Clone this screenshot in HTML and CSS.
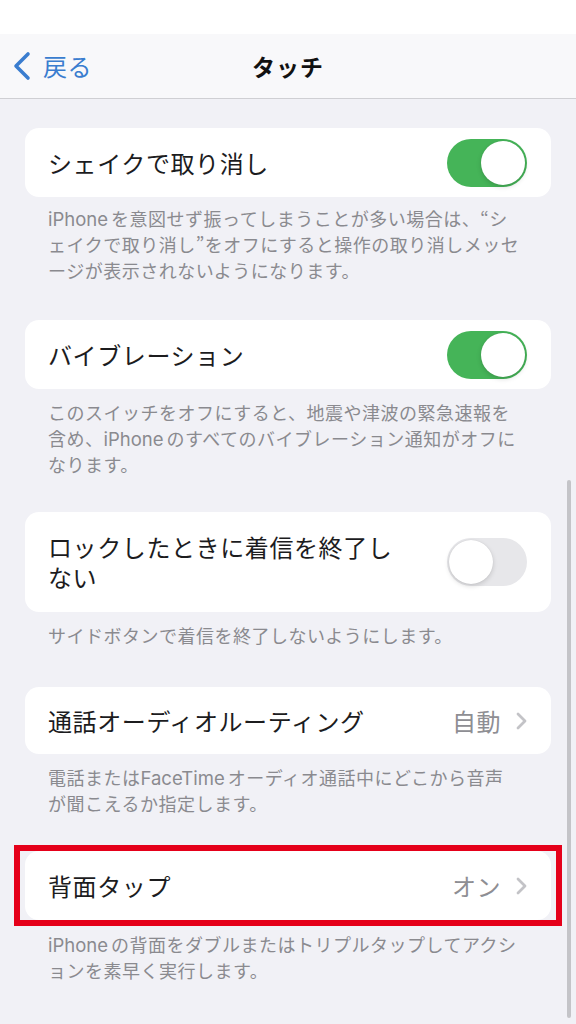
FILE: index.html
```html
<!DOCTYPE html>
<html lang="ja">
<head>
<meta charset="utf-8">
<title>タッチ</title>
<link rel="stylesheet" href="styles.css">
</head>
<body>
<div class="status"></div>
<header class="nav">
  <div class="back">
    <svg class="back-chev" width="20" height="30" viewBox="0 0 20 30"><path d="M16 3 L4 15 L16 27" fill="none" stroke="#3a7dcf" stroke-width="3.6" stroke-linecap="round" stroke-linejoin="round"/></svg>
    <span class="back-label">戻る</span>
  </div>
  <div class="title">タッチ</div>
  <div class="spacer"></div>
</header>
<main class="content">
  <section class="group g1">
    <div class="card">
      <span class="label">シェイクで取り消し</span>
      <span class="toggle on"><span class="knob"></span></span>
    </div>
    <p class="footer"><span class="latin">iPhone</span>を意図せず振ってしまうことが多い場合は、“シ<br>ェイクで取り消し”をオフにすると操作の取り消しメッセ<br>ージが表示されないようになります。</p>
  </section>
  <section class="group g2">
    <div class="card">
      <span class="label">バイブレーション</span>
      <span class="toggle on"><span class="knob"></span></span>
    </div>
    <p class="footer">このスイッチをオフにすると、地震や津波の緊急速報を<br>含め、<span class="latin">iPhone</span>のすべてのバイブレーション通知がオフに<br>なります。</p>
  </section>
  <section class="group g3">
    <div class="card tall">
      <span class="label wrap">ロックしたときに着信を終了しない</span>
      <span class="toggle off"><span class="knob"></span></span>
    </div>
    <p class="footer">サイドボタンで着信を終了しないようにします。</p>
  </section>
  <section class="group g4">
    <div class="card">
      <span class="label">通話オーディオルーティング</span>
      <span class="value">自動<svg class="chev" width="14" height="20" viewBox="0 0 14 20"><path d="M3 3 L10 10 L3 17" fill="none" stroke="#c3c3c7" stroke-width="2.8" stroke-linecap="round" stroke-linejoin="round"/></svg></span>
    </div>
    <p class="footer">電話または<span class="latin">FaceTime</span>オーディオ通話中にどこから音声<br>が聞こえるか指定します。</p>
  </section>
  <section class="group g5">
    <div class="highlight">
      <div class="card">
        <span class="label">背面タップ</span>
        <span class="value">オン<svg class="chev" width="14" height="20" viewBox="0 0 14 20"><path d="M3 3 L10 10 L3 17" fill="none" stroke="#c3c3c7" stroke-width="2.8" stroke-linecap="round" stroke-linejoin="round"/></svg></span>
      </div>
    </div>
    <p class="footer"><span class="latin">iPhone</span>の背面をダブルまたはトリプルタップしてアクシ<br>ョンを素早く実行します。</p>
  </section>
</main>
<div class="scrollbar"></div>
</body>
</html>
```
FILE: styles.css
```css
html, body {
  margin: 0;
  padding: 0;
}
body {
  width: 576px;
  height: 1024px;
  overflow: hidden;
  background: #f1f1f6;
  font-family: "Noto Sans CJK JP", "Noto Sans", sans-serif;
  color: #1c1c1e;
  position: relative;
}
.status {
  height: 34px;
  background: #ffffff;
}
.nav {
  height: 64px;
  background: #f8f8fa;
  border-bottom: 1px solid #cfcfd3;
  display: grid;
  grid-template-columns: 1fr auto 1fr;
  align-items: center;
}
.back {
  display: flex;
  align-items: center;
  padding-left: 12px;
  gap: 11px;
}
.back-chev {
  display: block;
}
.back-label {
  font-size: 24px;
  color: #3a7dcf;
  line-height: 1;
  letter-spacing: 0.5px;
}
.title {
  font-size: 23px;
  font-weight: 700;
  letter-spacing: 1px;
  color: #111;
}
.content {
  padding: 29px 25px 0 25px;
}
.group {
  margin: 0;
}
.card {
  background: #ffffff;
  border-radius: 14px;
  height: 69px;
  display: flex;
  align-items: center;
  justify-content: space-between;
  padding: 0 24px 0 23px;
  box-sizing: border-box;
}
.card.tall {
  height: 100px;
}
.label {
  font-size: 24px;
  line-height: 30px;
  letter-spacing: 0.6px;
  color: #1c1c1e;
}
.label.wrap {
  max-width: 355px;
}
.toggle {
  width: 80px;
  height: 48px;
  border-radius: 24px;
  position: relative;
  flex: none;
}
.toggle.on {
  background: #45b458;
}
.toggle.off {
  background: #e7e7ea;
}
.knob {
  position: absolute;
  top: 2px;
  width: 44px;
  height: 44px;
  border-radius: 50%;
  background: #ffffff;
  box-shadow: 0 2px 5px rgba(0,0,0,0.15), 0 0 1px rgba(0,0,0,0.12);
}
.toggle.on .knob {
  right: 2px;
}
.toggle.off .knob {
  left: 2px;
}
.value {
  display: flex;
  align-items: center;
  gap: 14px;
  font-size: 24px;
  letter-spacing: 0.5px;
  color: #8e8e93;
  margin-right: -2px;
}
.chev {
  display: block;
}
.footer {
  margin: 0;
  padding: 8px 23px 0 23px;
  font-size: 18px;
  line-height: 26px;
  letter-spacing: 0.5px;
  white-space: nowrap;
  color: #8a8a8f;
}
.latin {
  font-family: "Inter", "Noto Sans", sans-serif;
  font-size: 18.5px;
  line-height: 1;
  letter-spacing: 0;
  margin-right: 3px;
}
.g1 { margin-bottom: 37px; }
.g2 .footer { padding-top: 10px; }
.g2 { margin-bottom: 35px; }
.g3 .footer { padding-top: 10px; }
.g3 { margin-bottom: 39px; }
.g4 .card { height: 67px; }
.g4 .footer { padding-top: 10px; }
.g4 { margin-bottom: 29px; }
.highlight {
  border: 6px solid #e5001a;
  margin: 0 -11px;
  padding: 0 5px;
}
.g5 .card { height: 69px; }
.g5 .footer { padding-top: 5px; }
.scrollbar {
  position: absolute;
  left: 567px;
  top: 480px;
  width: 4px;
  height: 538px;
  border-radius: 2px;
  background: #c4c4c8;
}
```
